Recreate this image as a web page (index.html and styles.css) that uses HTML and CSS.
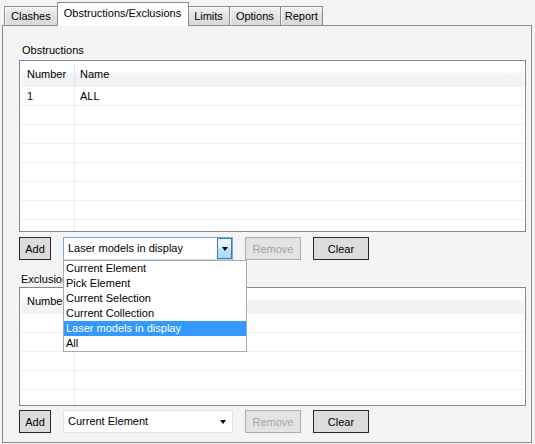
FILE: index.html
```html
<!DOCTYPE html>
<html lang="en">
<head>
    <meta charset="UTF-8">
    <title>Clash Options</title>
    <link rel="stylesheet" href="styles.css">
</head>
<body>

    <!-- Tab strip -->
    <div class="tabs">
        <div class="tab">Clashes</div>
        <div class="tab active">Obstructions/Exclusions</div>
        <div class="tab">Limits</div>
        <div class="tab">Options</div>
        <div class="tab tab-narrow">Report</div>
    </div>

    <div class="panel">

        <!-- Obstructions -->
        <div class="group-label">Obstructions</div>
        <div class="list list-tall">
            <div class="list-head">
                <div class="col-num">Number</div>
                <div class="col-name">Name</div>
            </div>
            <div class="list-row"><div class="col-num">1</div><div class="col-name">ALL</div></div>
            <div class="list-row"><div class="col-num"></div><div class="col-name"></div></div>
            <div class="list-row"><div class="col-num"></div><div class="col-name"></div></div>
            <div class="list-row"><div class="col-num"></div><div class="col-name"></div></div>
            <div class="list-row"><div class="col-num"></div><div class="col-name"></div></div>
            <div class="list-row"><div class="col-num"></div><div class="col-name"></div></div>
            <div class="list-row"><div class="col-num"></div><div class="col-name"></div></div>
            <div class="list-row"><div class="col-num"></div><div class="col-name"></div></div>
        </div>

        <div class="actions">
            <button class="btn btn-add">Add</button>
            <div class="combo focused">
                <span class="combo-text">Laser models in display</span>
                <span class="combo-arrow"><span class="tri"></span></span>

                <!-- open dropdown list -->
                <ul class="dropdown">
                    <li>Current Element</li>
                    <li>Pick Element</li>
                    <li>Current Selection</li>
                    <li>Current Collection</li>
                    <li class="selected">Laser models in display</li>
                    <li>All</li>
                </ul>
            </div>
            <button class="btn btn-remove" disabled>Remove</button>
            <button class="btn btn-clear">Clear</button>
        </div>

        <!-- Exclusions -->
        <div class="group-label label-exclusions">Exclusions</div>
        <div class="list list-short">
            <div class="list-head">
                <div class="col-num">Number</div>
                <div class="col-name">Name</div>
            </div>
            <div class="list-row"><div class="col-num"></div><div class="col-name"></div></div>
            <div class="list-row"><div class="col-num"></div><div class="col-name"></div></div>
            <div class="list-row"><div class="col-num"></div><div class="col-name"></div></div>
            <div class="list-row"><div class="col-num"></div><div class="col-name"></div></div>
            <div class="list-row"><div class="col-num"></div><div class="col-name"></div></div>
        </div>

        <div class="actions actions-last">
            <button class="btn btn-add">Add</button>
            <div class="combo">
                <span class="combo-text">Current Element</span>
                <span class="combo-arrow plain"><span class="tri"></span></span>
            </div>
            <button class="btn btn-remove" disabled>Remove</button>
            <button class="btn btn-clear">Clear</button>
        </div>

    </div>

</body>
</html>
```

FILE: styles.css
```css
body {
    font-family: "Liberation Sans", Arial, sans-serif;
    font-size: 11px;
    color: #000;
    background-color: #f4f4f4;
    margin: 0;
    padding: 0;
    width: 535px;
    height: 444px;
    overflow: hidden;
}

/* Tab strip */
.tabs {
    display: flex;
    align-items: flex-end;
    height: 25px;
    padding-left: 4px;
    position: relative;
    z-index: 2;
}

.tab {
    height: 18px;
    line-height: 18px;
    padding: 0 6px;
    border: 1px solid #898c95;
    border-bottom: none;
    margin-left: -1px;
    background: linear-gradient(#f2f2f2, #e3e3e3 50%, #d9d9d9);
    box-shadow: inset 1px 1px 0 #fbfbfb;
}

.tab:first-child {
    margin-left: 0;
}

.tab-narrow {
    padding: 0 4px;
}

.tab.active {
    height: 23px;
    line-height: 20px;
    margin-bottom: -1px;
    margin-left: -1px;
    margin-right: -1px;
    padding: 0 7px 0 6px;
    background: #fff;
    box-shadow: none;
    position: relative;
    z-index: 1;
}

/* Main panel */
.panel {
    margin: 0 3px 0 2px;
    border: 1px solid #898c95;
    background-color: #f4f4f4;
    padding: 18px 5px 0 16px;
    height: 398px;
    position: relative;
}

.group-label {
    height: 13px;
    line-height: 13px;
    padding-left: 3px;
    margin-bottom: 3px;
}

.label-exclusions {
    margin-top: 13px;
    margin-bottom: 1px;
    padding-left: 2px;
}

/* List views */
.list {
    border: 1px solid #828790;
    background-color: #fff;
    padding: 1px;
    overflow: hidden;
}

.list-tall {
    height: 168px;
}

.list-short {
    height: 115px;
}

.list-head {
    display: flex;
    height: 25px;
    background: linear-gradient(#fff 0%, #fff 40%, #f3f4f5 45%, #f1f2f4 100%);
}

.list-row {
    display: flex;
    height: 19px;
    box-sizing: border-box;
    border-bottom: 1px solid #ededed;
}

.list-head .col-num,
.list-head .col-name {
    line-height: 25px;
}

.col-num {
    width: 54px;
    padding-left: 6px;
    line-height: 18px;
    border-right: 1px solid #ededed;
    box-sizing: border-box;
    flex-shrink: 0;
}

.list-head .col-num {
    border-right-color: #e6e6e6;
}

.col-name {
    flex: 1;
    padding-left: 5px;
    line-height: 18px;
}

.list-row .col-num {
    color: #3a0000;
}

/* Button rows */
.actions {
    display: flex;
    align-items: flex-start;
    margin-top: 5px;
    height: 23px;
}

.actions-last {
    margin-top: 4px;
}

.btn {
    font-family: inherit;
    font-size: 11px;
    height: 23px;
    padding: 0;
    background-color: #dcdcdc;
    border: 1px solid #2a2a2a;
    color: #000;
}

.btn-add {
    width: 32px;
}

.btn-remove {
    width: 56px;
    margin-left: 12px;
    color: #a3a3a3;
    border-color: #adadad;
    background-color: #e3e3e3;
}

.btn-clear {
    width: 56px;
    margin-left: 12px;
}

/* Combo boxes */
.combo {
    position: relative;
    width: 170px;
    height: 23px;
    margin-left: 12px;
    box-sizing: border-box;
    background-color: #fff;
    border: 1px solid #e3e3e3;
    display: flex;
    align-items: center;
}

.combo.focused {
    border-color: #7ea6c9;
    border-bottom-color: #c5d3e0;
}

.combo-text {
    flex: 1;
    padding-left: 4px;
    padding-bottom: 1px;
}

.combo-arrow {
    width: 15px;
    height: 21px;
    box-sizing: border-box;
    border: 1px solid #3c7fb1;
    background: linear-gradient(#eaf6fd, #d9f0fc 45%, #bee6fd 50%, #a7d9f5);
    display: flex;
    align-items: center;
    justify-content: center;
}

.combo-arrow.plain {
    border: none;
    background: none;
    width: 18px;
}

.tri {
    width: 0;
    height: 0;
    border-left: 3.5px solid transparent;
    border-right: 3.5px solid transparent;
    border-top: 4px solid #000;
    margin-top: 1px;
}

/* Open dropdown list */
.dropdown {
    position: absolute;
    top: 22px;
    left: -1px;
    width: 184px;
    margin: 0;
    padding: 0;
    list-style: none;
    background-color: #fff;
    border: 1px solid #a5acb5;
    box-sizing: border-box;
    z-index: 10;
}

.dropdown li {
    height: 15px;
    line-height: 15px;
    padding-left: 2px;
}

.dropdown li.selected {
    background-color: #3399ff;
    color: #fff;
}
```
